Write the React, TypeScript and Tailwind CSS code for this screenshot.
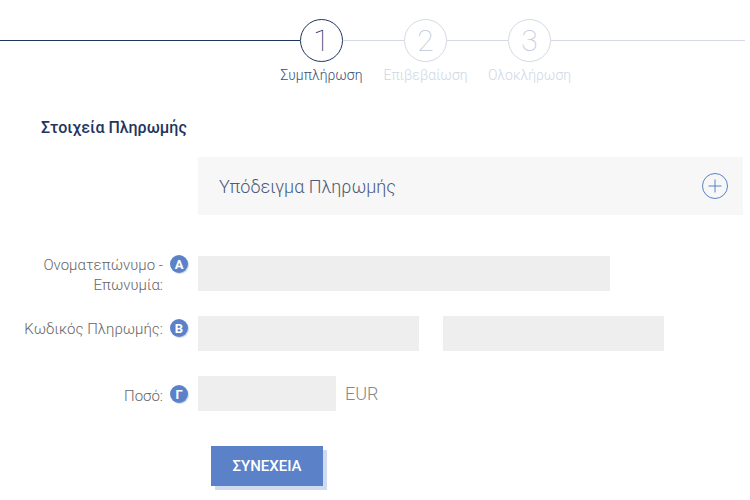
const steps = [
  { n: "1", label: "Συμπλήρωση", active: true },
  { n: "2", label: "Επιβεβαίωση", active: false },
  { n: "3", label: "Ολοκλήρωση", active: false },
];

function Badge({ letter }: { letter: string }) {
  return (
    <span className="flex h-[18px] w-[18px] shrink-0 items-center justify-center rounded-full bg-[#5b82c8] text-[13px] leading-none font-bold text-white shadow-[1px_1px_0_#d0dbef]">
      {letter}
    </span>
  );
}

function Field({ className }: { className: string }) {
  return <div className={`h-[35px] bg-[#eeeeee] ${className}`} />;
}

export default function App() {
  return (
    <div className="h-[500px] w-[750px] overflow-hidden bg-white font-['Roboto',sans-serif]">
      {/* stepper */}
      <div className="flex w-[745px] items-center pt-[19px]">
        <div className="h-px w-[300px] bg-[#1f3560]" />
        <div className="flex h-[43px] w-[43px] shrink-0 items-center justify-center rounded-full border border-[#1f3560] text-[30px] font-thin text-[#1f3560]">
          1
        </div>
        <div className="h-px w-[61px] bg-[#d5d9e3]" />
        <div className="flex h-[43px] w-[43px] shrink-0 items-center justify-center rounded-full border border-[#d5d9e3] text-[30px] font-thin text-[#bcc8dc]">
          2
        </div>
        <div className="h-px w-[61px] bg-[#d5d9e3]" />
        <div className="flex h-[43px] w-[43px] shrink-0 items-center justify-center rounded-full border border-[#d5d9e3] text-[30px] font-thin text-[#bcc8dc]">
          3
        </div>
        <div className="h-px flex-1 bg-[#d5d9e3]" />
      </div>
      <div className="ml-[269.5px] mt-[5px] flex">
        {steps.map((s) => (
          <div
            key={s.n}
            className={`w-[104px] text-center text-[14px] leading-[16px] font-light whitespace-nowrap ${
              s.active ? "text-[#3d4f78]" : "text-[#cfd7e6]"
            }`}
          >
            {s.label}
          </div>
        ))}
      </div>

      <h2 className="ml-[41px] mt-[37px] text-[16px] leading-[16px] font-medium text-[#1f3560]">
        Στοιχεία Πληρωμής
      </h2>

      {/* template panel */}
      <div className="ml-[198px] mt-[21px] flex h-[58px] w-[545px] items-center justify-between bg-[#f7f7f7] pl-[21px] pr-[15px]">
        <span className="text-[18px] font-light text-[#4a5a78]">Υπόδειγμα Πληρωμής</span>
        <svg width="26" height="26" viewBox="0 0 26 26" fill="none" stroke="#5b82c8" strokeWidth="1">
          <circle cx="13" cy="13" r="12.5" />
          <path d="M13 6.5v13M6.5 13h13" />
        </svg>
      </div>

      {/* form */}
      <div className="mt-[41px] flex flex-col gap-[25px]">
        <div className="flex h-[35px] items-start">
          <div className="-mt-px w-[163px] text-right text-[15px] leading-[20px] font-light text-[#666666]">
            Ονοματεπώνυμο -<br />
            Επωνυμία:
          </div>
          <div className="-mt-px ml-[7px] mr-[10px]">
            <Badge letter="Α" />
          </div>
          <Field className="w-[412px]" />
        </div>

        <div className="flex h-[35px] items-start">
          <div className="pt-[3px] w-[163px] text-right text-[15px] leading-[20px] font-light whitespace-nowrap text-[#666666]">
            Κωδικός Πληρωμής:
          </div>
          <div className="ml-[7px] mr-[10px] pt-[3px]">
            <Badge letter="Β" />
          </div>
          <Field className="w-[221px]" />
          <Field className="ml-6 w-[221px]" />
        </div>

        <div className="flex h-[35px] items-start">
          <div className="w-[163px] pt-[10px] text-right text-[15px] leading-[20px] font-light text-[#666666]">
            Ποσό:
          </div>
          <div className="ml-[7px] mr-[10px] pt-[9px]">
            <Badge letter="Γ" />
          </div>
          <Field className="w-[138px]" />
          <span className="ml-[9px] text-[18px] leading-[35px] font-light text-[#888888]">EUR</span>
        </div>
      </div>

      <button className="ml-[211px] mt-[35px] h-10 w-[112px] bg-[#5b82c8] text-[15px] font-medium text-white shadow-[4px_4px_0_#d0dbef]">
        ΣΥΝΕΧΕΙΑ
      </button>
    </div>
  );
}
